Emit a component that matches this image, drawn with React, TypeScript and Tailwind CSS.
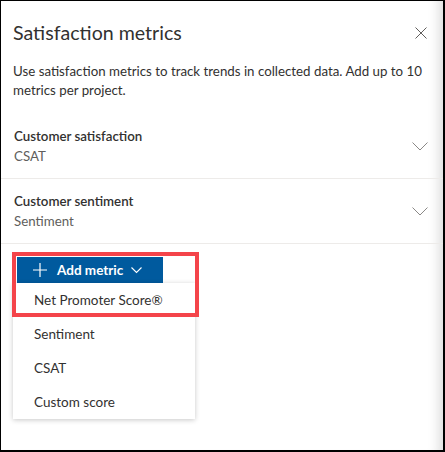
import React from "react";

const font = { fontFamily: 'Lato, "Open Sans", sans-serif' };

function Chevron({ className = "" }: { className?: string }) {
  return (
    <svg width="16" height="9" viewBox="0 0 16 9" className={className} fill="none">
      <path d="M0.5 0.5 L8 8 L15.5 0.5" stroke="#8a8886" strokeWidth="1" />
    </svg>
  );
}

function Row({ title, sub }: { title: string; sub: string }) {
  return (
    <div className="flex items-center justify-between border-b border-[#edebe9] pl-[13px] pr-[15px] pt-[12px] pb-[12px]">
      <div>
        <div className="text-[13.3px] leading-[20px] font-semibold text-[#323130]">{title}</div>
        <div className="text-[13.3px] leading-[20px] text-[#605e5c]">{sub}</div>
      </div>
      <Chevron />
    </div>
  );
}

export default function App() {
  return (
    <div className="w-[445px] h-[452px] bg-black pl-px pt-px pr-[2px] pb-[2px]" style={font}>
      <div className="relative w-full h-full bg-white shadow-[inset_-14px_0_12px_-10px_rgba(0,0,0,0.14)] overflow-hidden">
        <div className="flex items-center justify-between pl-[12px] pr-[16px] pt-[19px]">
          <div className="text-[19.6px] leading-[26px] font-normal text-[#323130]">Satisfaction metrics</div>
          <svg width="12" height="12" viewBox="0 0 12 12" fill="none">
            <path d="M0.5 0.5 L11.5 11.5 M11.5 0.5 L0.5 11.5" stroke="#605e5c" strokeWidth="1" />
          </svg>
        </div>
        <p className="pl-[12px] pr-[20px] pt-[16px] pb-[14px] text-[13.3px] leading-[19px] text-[#323130]">
          Use satisfaction metrics to track trends in collected data. Add up to 10 metrics per project.
        </p>
        <Row title="Customer satisfaction" sub="CSAT" />
        <Row title="Customer sentiment" sub="Sentiment" />
        <div className="pl-[16px] pt-[13px]">
          <div className="flex items-center w-[146px] h-[26px] bg-[#005a9e] text-white pl-[16px]">
            <svg width="14" height="14" viewBox="0 0 14 14" fill="none">
              <path d="M7 0 V14 M0 7 H14" stroke="white" strokeWidth="1.2" />
            </svg>
            <span className="ml-[10px] text-[13.5px] font-bold leading-[20px]">Add metric</span>
            <svg width="11" height="7" viewBox="0 0 11 7" fill="none" className="ml-[8px]">
              <path d="M0.5 0.5 L5.5 5.5 L10.5 0.5" stroke="white" strokeWidth="1.1" />
            </svg>
          </div>
        </div>
        <div className="absolute left-[12px] top-[282px] w-[182px] bg-white shadow-[0_1px_5px_rgba(0,0,0,0.22)]">
          {["Net Promoter Score®", "Sentiment", "CSAT", "Custom score"].map((t) => (
            <div key={t} className="h-[34px] flex items-center pl-[21px] text-[13.5px] text-[#323130]">
              {t}
            </div>
          ))}
        </div>
        <div className="absolute left-[11px] top-[251px] w-[187px] h-[65px] border-[4px] border-[#f4444a] pointer-events-none" />
      </div>
    </div>
  );
}
